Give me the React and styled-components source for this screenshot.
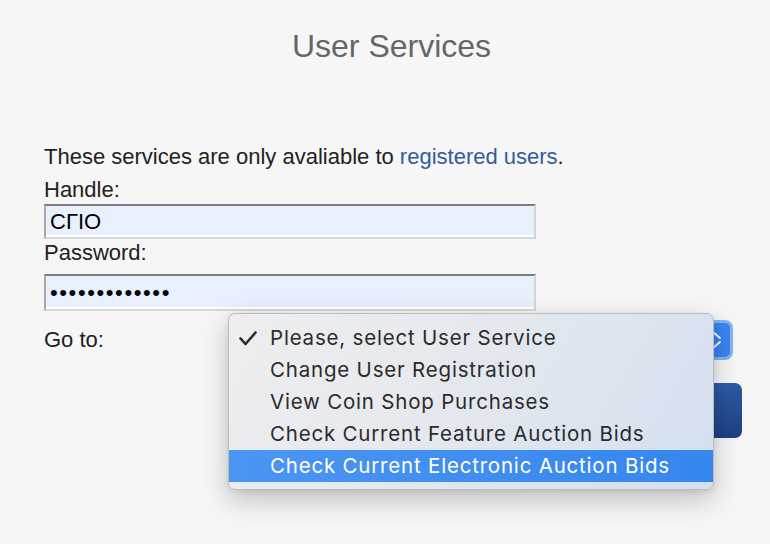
import React from 'react';
import styled, { createGlobalStyle } from 'styled-components';

const GlobalStyle = createGlobalStyle`
  html, body {
    margin: 0;
    padding: 0;
    background: #f6f6f6;
  }
  body {
    font-family: "Liberation Sans", Arial, Helvetica, sans-serif;
    color: #222;
  }
`

const Page = styled.div`
  width: 770px;
  height: 544px;
  overflow: hidden;
  background: #f6f6f6;
`

const Title = styled.h1`
  margin: 28px 0 0;
  padding-left: 13px;
  height: 36px;
  line-height: 36px;
  text-align: center;
  font-size: 32px;
  font-weight: 400;
  color: #666;
`

const Form = styled.form`
  margin: 79px 28px 0 44px;
  display: flex;
  flex-direction: column;
  align-items: flex-start;
`

const Text = styled.p`
  margin: 0;
  font-size: 22px;
  line-height: 28px;
  color: #222;
`

const Link = styled.a`
  color: #345b9c;
  text-decoration: none;
`

const Label = styled.label`
  display: block;
  margin-top: ${p => p.$gap || 0}px;
  font-size: 22px;
  line-height: 28px;
  color: #222;
`

const Input = styled.input`
  box-sizing: border-box;
  width: 492px;
  height: ${p => p.$h || 35}px;
  margin: ${p => p.$gap || 0}px 0 0;
  padding: 0 4px;
  background: #e8f0fe;
  border-top: 2px solid #7c7c7c;
  border-left: 2px solid #a8a8a8;
  border-right: 2px solid #d6d6d6;
  border-bottom: 2px solid #d6d6d6;
  box-shadow: inset 0 -2px 0 #fff;
  font-family: "Liberation Sans", Arial, sans-serif;
  font-size: 22px;
  color: #000;
  letter-spacing: ${p => p.$spacing || 0}px;
  outline: none;
`

const GoRow = styled.div`
  align-self: stretch;
  display: flex;
  align-items: center;
  height: 40px;
  margin-top: 9px;
  padding-right: 9px;
`

const Select = styled.div`
  position: relative;
  margin-left: auto;
  width: 480px;
  height: 40px;
  box-sizing: border-box;
  display: flex;
  justify-content: flex-end;
  border-radius: 7px;
`

const Cap = styled.div`
  width: 20px;
  height: 40px;
  box-sizing: border-box;
  border-radius: 0 8px 8px 0;
  background: #3b84f2;
  border: 3px solid #86b3f2;
  border-left: none;
  display: flex;
  align-items: center;
  justify-content: flex-start;
`

const Menu = styled.ul`
  position: absolute;
  left: -25px;
  top: -7px;
  width: 486px;
  box-sizing: border-box;
  margin: 0;
  padding: 8px 0 7px;
  list-style: none;
  border-radius: 7px;
  border: 1px solid #bcbcbc;
  background: linear-gradient(120deg, #eeeeef 0%, #e6e9ee 40%, #d4e0f0 100%);
  box-shadow: 0 10px 28px rgba(0, 0, 0, 0.22), 0 2px 6px rgba(0, 0, 0, 0.08);
  z-index: 5;
`

const Item = styled.li`
  position: relative;
  height: 32px;
  line-height: 32px;
  padding-left: 41px;
  font-family: Inter, "Noto Sans", sans-serif;
  font-size: 20.5px;
  letter-spacing: 0.8px;
  color: ${p => (p.$active ? '#fff' : '#2b2b2b')};
  background: ${p => (p.$active ? 'linear-gradient(90deg, #4b95f4, #3586ee)' : 'transparent')};
  white-space: nowrap;
`

const Check = styled.svg`
  position: absolute;
  left: 10px;
  top: 9px;
`

const ButtonRow = styled.div`
  align-self: stretch;
  display: flex;
  justify-content: flex-end;
  margin-top: 23px;
`

const Button = styled.button`
  width: 200px;
  height: 55px;
  border: none;
  border-radius: 7px;
  background: linear-gradient(180deg, #2c5ca5 0%, #1d4086 100%);
  color: #fff;
  font-family: "Liberation Sans", Arial, sans-serif;
  font-size: 20px;
`

const options = [
  'Please, select User Service',
  'Change User Registration',
  'View Coin Shop Purchases',
  'Check Current Feature Auction Bids',
  'Check Current Electronic Auction Bids',
]

function App () {
  return (
    <Page>
      <GlobalStyle />
      <Title>User Services</Title>
      <Form onSubmit={e => e.preventDefault()}>
        <Text>These services are only avaliable to <Link href="#">registered users</Link>.</Text>
        <Label $gap={5}>Handle:</Label>
        <Input readOnly defaultValue="CΓIO" />
        <Label>Password:</Label>
        <Input type="password" readOnly defaultValue="abcdefghijklm" $gap={7} $h={37} $spacing={1.6} />
        <GoRow>
          <Label>Go to:</Label>
          <Select>
            <Cap>
              {/* right halves of the up / down chevrons */}
              <svg width="9" height="20" viewBox="0 0 9 20">
                <path d="M0 2 L7 8" fill="none" stroke="#fff" strokeWidth="1.8" strokeLinecap="round" />
                <path d="M0 18 L7 12" fill="none" stroke="#fff" strokeWidth="1.8" strokeLinecap="round" />
              </svg>
            </Cap>
            <Menu>
              {options.map((o, i) => (
                <Item key={o} $active={i === options.length - 1}>
                  {i === 0 && (
                    <Check width="18" height="15" viewBox="0 0 18 15">
                      <path d="M1.5 7.5 L6.5 13 L16.5 1.5" fill="none" stroke="#2b2b2b" strokeWidth="2.6" strokeLinecap="round" strokeLinejoin="round" />
                    </Check>
                  )}
                  {o}
                </Item>
              ))}
            </Menu>
          </Select>
        </GoRow>
        <ButtonRow>
          <Button type="submit">Go</Button>
        </ButtonRow>
      </Form>
    </Page>
  )
}

export default App;
